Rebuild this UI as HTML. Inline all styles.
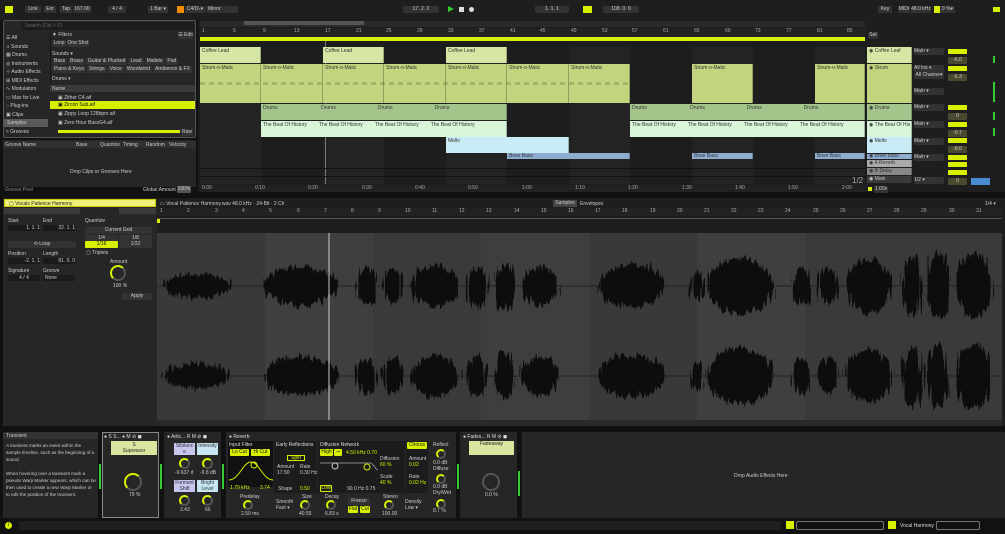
<!DOCTYPE html><html><head><meta charset="utf-8"><style>
*{margin:0;padding:0;box-sizing:border-box}
body{width:1005px;height:534px;background:#111;font-family:"Liberation Sans",sans-serif;font-size:5px;color:#ccc;position:relative;overflow:hidden}
.a{position:absolute;white-space:nowrap}
.p{background:#262626}
.b{background:#333;color:#ccc;border-radius:1px;text-align:center;line-height:7px;height:7px}
.y{background:#d8f000;color:#111}
.c{position:absolute;color:#333;font-size:5px;padding:1px 2px;overflow:hidden;border-right:1px solid rgba(0,0,0,.25);white-space:nowrap}
.k{position:absolute;border-radius:50%;border:2px solid #d8f000;border-right-color:#555;border-bottom-color:#555}
.t{color:#ddd}
</style></head><body>
<div class="a" style="left:0;top:0;width:1005px;height:20px;background:#1e1e1e"></div>
<div class="a y" style="left:5px;top:6px;width:8px;height:7px"></div>
<div class="a b" style="left:25px;top:6px;width:16px">Link</div>
<div class="a b" style="left:44px;top:6px;width:12px">Ext</div>
<div class="a b" style="left:60px;top:6px;width:12px">Tap</div>
<div class="a b" style="left:73px;top:6px;width:18px">167.00</div>
<div class="a b" style="left:108px;top:6px;width:18px">4 / 4</div>
<div class="a b" style="left:148px;top:6px;width:20px">1 Bar ▾</div>
<div class="a" style="left:177px;top:6px;width:7px;height:7px;background:#f08c00"></div>
<div class="a b" style="left:185px;top:6px;width:20px">C4/D♭▾</div>
<div class="a b" style="left:206px;top:6px;width:32px;text-align:left;padding-left:2px">Minor</div>
<div class="a b" style="left:403px;top:6px;width:36px">17.  2.  2</div>
<div class="a" style="left:448px;top:6px;width:0;height:0;border-left:6px solid #3c3;border-top:3.5px solid transparent;border-bottom:3.5px solid transparent"></div>
<div class="a" style="left:459px;top:7px;width:5px;height:5px;background:#ddd"></div>
<div class="a" style="left:469px;top:7px;width:5px;height:5px;background:#ddd;border-radius:50%"></div>
<div class="a b" style="left:535px;top:6px;width:34px">1.  1.  1</div>
<div class="a y" style="left:583px;top:6px;width:9px;height:7px"></div>
<div class="a b" style="left:603px;top:6px;width:36px">108.  0.  0</div>
<div class="a b" style="left:878px;top:6px;width:14px">Key</div>
<div class="a b" style="left:898px;top:6px;width:12px">MIDI</div>
<div class="a b" style="left:911px;top:6px;width:20px">48.0 kHz</div>
<div class="a y" style="left:934px;top:6px;width:6px;height:7px"></div>
<div class="a b" style="left:940px;top:6px;width:15px">0 %▾</div>
<div class="a y" style="left:993px;top:7px;width:7px;height:5px"></div>
<!-- browser -->
<div class="a p" style="left:3px;top:20px;width:193px;height:118px;border:1px solid #555;border-radius:2px"></div>
<div class="a" style="left:22px;top:22px;width:172px;height:8px;background:#1c1c1c;color:#666;padding:1px 3px">Search (Ctrl + F)</div>
<div class="a" style="left:6px;top:34px;line-height:8.5px;color:#ccc">☰ All<br>♫ Sounds<br>▦ Drums<br>◎ Instruments<br>⊹ Audio Effects<br>⊞ MIDI Effects<br>∿ Modulators<br>▭ Max for Live<br>◌ Plug-ins<br>▣ Clips</div>
<div class="a" style="left:4px;top:119px;width:44px;height:8px;background:#5a5a5a;padding:1px 3px">Samples</div>
<div class="a" style="left:6px;top:129px">≈ Grooves</div>
<div class="a" style="left:50px;top:31px;width:145px;height:54px;background:#262626;border-left:1px solid #1a1a1a"></div>
<div class="a" style="left:52px;top:32px">▼ Filters</div><div class="a b" style="left:178px;top:32px;width:15px">☰ Edit</div>
<div class="a b" style="left:52px;top:40px;width:14px">Loop</div><div class="a b" style="left:67px;top:40px;width:22px">One Shot</div>
<div class="a" style="left:52px;top:51px">Sounds ▾</div>
<div class="a" style="left:52px;top:58px;display:flex;gap:1px;flex-wrap:wrap;width:140px;white-space:normal"><span class="b" style="padding:0 2px">Bass</span><span class="b" style="padding:0 2px">Brass</span><span class="b" style="padding:0 2px">Guitar &amp; Plucked</span><span class="b" style="padding:0 2px">Lead</span><span class="b" style="padding:0 2px">Mallets</span><span class="b" style="padding:0 2px">Pad</span><span class="b" style="padding:0 2px">Piano &amp; Keys</span><span class="b" style="padding:0 2px">Strings</span><span class="b" style="padding:0 2px">Voice</span><span class="b" style="padding:0 2px">Woodwind</span><span class="b" style="padding:0 2px">Ambience &amp; FX</span></div>
<div class="a" style="left:52px;top:76px">Drums ▾</div>
<div class="a" style="left:50px;top:85px;width:145px;height:7px;background:#3a3a3a;padding:1px 2px">Name</div>
<div class="a" style="left:58px;top:94px;line-height:8.5px">▣ Zither C4.aif</div>
<div class="a y" style="left:50px;top:101px;width:145px;height:8px;padding:1px 8px">▣ Zircon Sub.aif</div>
<div class="a" style="left:58px;top:110px;line-height:8.5px">▣ Zippy Loop 128bpm.aif<br>▣ Zero Hour BassG4.aif</div>
<div class="a" style="left:58px;top:130px;width:122px;height:3px;background:#d8f000"></div>
<div class="a b" style="left:181px;top:129px;width:12px">Raw</div>
<!-- groove pool -->
<div class="a p" style="left:3px;top:140px;width:193px;height:47px"></div>
<div class="a" style="left:3px;top:141px;width:193px;height:7px;background:#303030"></div>
<div class="a" style="left:5px;top:142px">Groove Name</div><div class="a" style="left:76px;top:142px">Base</div><div class="a" style="left:100px;top:142px">Quantize</div><div class="a" style="left:123px;top:142px">Timing</div><div class="a" style="left:146px;top:142px">Random</div><div class="a" style="left:169px;top:142px">Velocity</div>
<div class="a" style="left:70px;top:169px">Drop Clips or Grooves Here</div>
<div class="a" style="left:5px;top:187px;color:#888">Groove Pool</div>
<div class="a" style="left:143px;top:187px">Global Amount</div><div class="a b" style="left:177px;top:186px;width:14px;background:#555">100%</div>
<!-- arrangement -->
<div class="a" style="left:198px;top:20px;width:668px;height:172px;background:#1c1c1c"></div>
<div class="a" style="left:200px;top:21px;width:665px;height:6px;background:#2a2a2a"></div>
<div class="a" style="left:244px;top:21px;width:120px;height:4px;background:#555"></div>
<div class="a" style="left:200px;top:28px;width:665px;height:9px;background:#222;color:#aaa;font-size:5px">
<span class="a" style="left:2px">1</span><span class="a" style="left:33px">5</span><span class="a" style="left:63px">9</span><span class="a" style="left:94px">13</span><span class="a" style="left:125px">17</span><span class="a" style="left:156px">21</span><span class="a" style="left:186px">25</span><span class="a" style="left:217px">29</span><span class="a" style="left:248px">33</span><span class="a" style="left:279px">37</span><span class="a" style="left:310px">41</span><span class="a" style="left:340px">45</span><span class="a" style="left:371px">49</span><span class="a" style="left:402px">53</span><span class="a" style="left:432px">57</span><span class="a" style="left:463px">61</span><span class="a" style="left:494px">65</span><span class="a" style="left:525px">69</span><span class="a" style="left:555px">73</span><span class="a" style="left:586px">77</span><span class="a" style="left:617px">81</span><span class="a" style="left:647px">85</span></div>
<div class="a" style="left:200px;top:37px;width:665px;height:4px;background:#d8f000"></div>
<div class="a" style="left:200px;top:47px;width:665px;height:137px;background:repeating-linear-gradient(90deg,#232323 0 61px,#1d1d1d 61px 123px)"></div>
<div class="a" style="left:325px;top:41px;width:1px;height:143px;background:#777"></div>
<div class="c" style="left:200px;top:47px;width:61px;height:16px;background:#d6e6a4">Coffee Lead</div>
<div class="c" style="left:323px;top:47px;width:61px;height:16px;background:#d6e6a4">Coffee Lead</div>
<div class="c" style="left:446px;top:47px;width:61px;height:16px;background:#d6e6a4">Coffee Lead</div>
<div class="c" style="left:200px;top:64px;width:61px;height:39px;background:#c3d47f">Strum-o-Matic</div>
<div class="c" style="left:261px;top:64px;width:62px;height:39px;background:#c3d47f">Strum-o-Matic</div>
<div class="c" style="left:323px;top:64px;width:61px;height:39px;background:#c3d47f">Strum-o-Matic</div>
<div class="c" style="left:384px;top:64px;width:62px;height:39px;background:#c3d47f">Strum-o-Matic</div>
<div class="c" style="left:446px;top:64px;width:61px;height:39px;background:#c3d47f">Strum-o-Matic</div>
<div class="c" style="left:507px;top:64px;width:62px;height:39px;background:#c3d47f">Strum-o-Matic</div>
<div class="c" style="left:569px;top:64px;width:61px;height:39px;background:#c3d47f">Strum-o-Matic</div>
<div class="c" style="left:692px;top:64px;width:61px;height:39px;background:#c3d47f">Strum-o-Matic</div>
<div class="c" style="left:815px;top:64px;width:50px;height:39px;background:#c3d47f">Strum-o-Matic</div>
<div class="a" style="left:200px;top:82px;width:430px;height:3px;background:repeating-linear-gradient(90deg,rgba(0,0,0,.15) 0 5px,transparent 5px 9px)"></div>
<div class="c" style="left:261px;top:104px;width:246px;height:16px;background:#a3c48b">Drums <span style="margin-left:42px">Drums</span><span style="margin-left:42px">Drums</span><span style="margin-left:42px">Drums</span></div>
<div class="c" style="left:630px;top:104px;width:235px;height:16px;background:#a3c48b">Drums <span style="margin-left:42px">Drums</span><span style="margin-left:42px">Drums</span><span style="margin-left:42px">Drums</span></div>
<div class="c" style="left:261px;top:121px;width:246px;height:16px;background:#d9f6d9">The Beat Of History<span style="margin-left:12px">The Beat Of History</span><span style="margin-left:12px">The Beat Of History</span><span style="margin-left:12px">The Beat Of History</span></div>
<div class="c" style="left:630px;top:121px;width:235px;height:16px;background:#d9f6d9">The Beat Of History<span style="margin-left:12px">The Beat Of History</span><span style="margin-left:12px">The Beat Of History</span><span style="margin-left:12px">The Beat Of History</span></div>
<div class="c" style="left:446px;top:137px;width:123px;height:16px;background:#c9ebf5">Mello</div>
<div class="c" style="left:507px;top:153px;width:123px;height:6px;background:#8eacd0;padding:0 2px;line-height:6px">Bose Bass</div>
<div class="c" style="left:692px;top:153px;width:61px;height:6px;background:#8eacd0;padding:0 2px;line-height:6px">Bose Bass</div>
<div class="c" style="left:815px;top:153px;width:50px;height:6px;background:#8eacd0;padding:0 2px;line-height:6px">Bose Bass</div>
<div class="a" style="left:200px;top:168px;width:665px;height:1px;background:#111"></div>
<div class="a" style="left:200px;top:176px;width:665px;height:1px;background:#111"></div>
<div class="a" style="left:852px;top:176px;font-size:8px;color:#aaa">1/2</div>
<div class="a" style="left:200px;top:185px;width:665px;height:7px;background:#222;color:#aaa"><span class="a" style="left:2px">0:00</span><span class="a" style="left:55px">0:10</span><span class="a" style="left:108px">0:20</span><span class="a" style="left:162px">0:30</span><span class="a" style="left:215px">0:40</span><span class="a" style="left:268px">0:50</span><span class="a" style="left:322px">1:00</span><span class="a" style="left:375px">1:10</span><span class="a" style="left:428px">1:20</span><span class="a" style="left:482px">1:30</span><span class="a" style="left:535px">1:40</span><span class="a" style="left:588px">1:50</span><span class="a" style="left:642px">2:00</span></div>
<!-- track headers -->
<div class="a" style="left:866px;top:20px;width:139px;height:172px;background:#1e1e1e"></div>
<div class="a b" style="left:868px;top:32px;width:10px">Set</div>
<div class="c" style="left:867px;top:47px;width:45px;height:16px;background:#d6e6a4">◉ Coffee Leaf</div>
<div class="c" style="left:867px;top:64px;width:45px;height:39px;background:#c3d47f">◉ Strum</div>
<div class="c" style="left:867px;top:104px;width:45px;height:16px;background:#a3c48b">◉ Drums</div>
<div class="c" style="left:867px;top:121px;width:45px;height:16px;background:#d9f6d9">◉ The Beat Of His</div>
<div class="c" style="left:867px;top:137px;width:45px;height:16px;background:#c9ebf5">◉ Mello</div>
<div class="c" style="left:867px;top:154px;width:45px;height:5px;background:#8eacd0;padding:0 2px;line-height:5px">◉ Bose Bass</div>
<div class="c" style="left:867px;top:160px;width:45px;height:7px;background:#aaa;line-height:5px">◉ A Reverb</div>
<div class="c" style="left:867px;top:168px;width:45px;height:7px;background:#888;line-height:5px">◉ B Delay</div>
<div class="c" style="left:867px;top:176px;width:45px;height:7px;background:#3a3a3a;color:#ccc;line-height:5px">◉ Main</div>
<div class="a" style="left:914px;top:48px;line-height:1">
<div class="b" style="width:30px;text-align:left;position:absolute;top:0">Main ▾</div>
<div class="b" style="width:30px;text-align:left;position:absolute;top:17px">All Ins ▾</div>
<div class="b" style="width:30px;position:absolute;top:24px">All Channe▾</div>
<div class="b" style="width:30px;text-align:left;position:absolute;top:40px">Main ▾</div>
<div class="b" style="width:30px;text-align:left;position:absolute;top:56px">Main ▾</div>
<div class="b" style="width:30px;text-align:left;position:absolute;top:73px">Main ▾</div>
<div class="b" style="width:30px;text-align:left;position:absolute;top:90px">Main ▾</div>
<div class="b" style="width:30px;text-align:left;position:absolute;top:106px">Main ▾</div>
<div class="b" style="width:30px;text-align:left;position:absolute;top:129px">1/2 ▾</div></div>
<div class="a" style="left:948px;top:48px">
<div class="y" style="position:absolute;width:19px;height:5px;top:1px"></div><div class="b" style="position:absolute;width:19px;top:9px;background:#4a4a30">-6.0</div>
<div class="y" style="position:absolute;width:19px;height:5px;top:18px"></div><div class="b" style="position:absolute;width:19px;top:26px;background:#4a4a30">-6.3</div>
<div class="y" style="position:absolute;width:19px;height:5px;top:57px"></div><div class="b" style="position:absolute;width:19px;top:65px;background:#4a4a30">0</div>
<div class="y" style="position:absolute;width:19px;height:5px;top:74px"></div><div class="b" style="position:absolute;width:19px;top:82px;background:#4a4a30">-0.7</div>
<div class="y" style="position:absolute;width:19px;height:5px;top:90px"></div><div class="b" style="position:absolute;width:19px;top:98px;background:#4a4a30">-8.0</div>
<div class="y" style="position:absolute;width:19px;height:5px;top:107px"></div>
<div class="y" style="position:absolute;width:19px;height:5px;top:114px"></div>
<div class="y" style="position:absolute;width:19px;height:5px;top:122px"></div>
<div class="b" style="position:absolute;width:19px;top:130px;background:#4a4a30">0</div>
<div style="position:absolute;left:23px;top:130px;width:19px;height:7px;background:#4a8ad0"></div></div>
<div class="a" style="left:993px;top:56px;width:2px;height:7px;background:#3c3"></div>
<div class="a" style="left:993px;top:82px;width:2px;height:20px;background:#3c3"></div>
<div class="a" style="left:993px;top:112px;width:2px;height:8px;background:#3c3"></div>
<div class="a" style="left:993px;top:128px;width:2px;height:8px;background:#3c3"></div>
<div class="a y" style="left:868px;top:187px;width:4px;height:4px"></div><div class="a b" style="left:874px;top:186px;width:14px">1.00x</div>
<!-- clip view -->
<div class="a p" style="left:3px;top:198px;width:154px;height:228px"></div>
<div class="a" style="left:4px;top:199px;width:152px;height:8px;background:#eef07a;color:#222;padding:1px 4px;border:1px solid #cc0">▢ Vocals Patience Harmony</div>
<div class="a" style="left:4px;top:208px;width:76px;height:6px;background:#3a3a3a"></div>
<div class="a" style="left:119px;top:208px;width:37px;height:6px;background:#3a3a3a"></div>
<div class="a" style="left:8px;top:218px">Start</div><div class="a" style="left:43px;top:218px">End</div>
<div class="a" style="left:8px;top:225px;width:32px;height:6px;background:#1a1a1a;text-align:right">1.  1.  1</div>
<div class="a" style="left:43px;top:225px;width:32px;height:6px;background:#1a1a1a;text-align:right">32.  1.  1</div>
<div class="a b" style="left:8px;top:241px;width:68px">⟲ Loop</div>
<div class="a" style="left:8px;top:251px">Position</div><div class="a" style="left:43px;top:251px">Length</div>
<div class="a" style="left:8px;top:258px;width:32px;height:6px;background:#1a1a1a;text-align:right">-2.  1.  1</div>
<div class="a" style="left:43px;top:258px;width:32px;height:6px;background:#1a1a1a;text-align:right">81.  0.  0</div>
<div class="a" style="left:8px;top:268px">Signature</div><div class="a" style="left:43px;top:268px">Groove</div>
<div class="a" style="left:8px;top:275px;width:32px;height:6px;background:#1a1a1a;text-align:center">4 / 4</div>
<div class="a" style="left:43px;top:275px;width:32px;height:6px;background:#1a1a1a;padding-left:2px">None</div>
<div class="a" style="left:85px;top:218px">Quantize</div>
<div class="a b" style="left:85px;top:227px;width:67px">Current Grid</div>
<div class="a b" style="left:85px;top:235px;width:33px">1/4</div><div class="a b" style="left:119px;top:235px;width:33px">1/8</div>
<div class="a b y" style="left:85px;top:241px;width:33px">1/16</div><div class="a b" style="left:119px;top:241px;width:33px">1/32</div>
<div class="a" style="left:86px;top:250px">▢ Triplets</div>
<div class="a" style="left:110px;top:259px">Amount</div>
<div class="k" style="left:110px;top:265px;width:16px;height:16px"></div>
<div class="a" style="left:113px;top:283px">100 %</div>
<div class="a b" style="left:122px;top:293px;width:30px">Apply</div>
<!-- waveform -->
<div class="a" style="left:157px;top:198px;width:848px;height:228px;background:#1e1e1e"></div>
<div class="a" style="left:160px;top:201px">▭ Vocal Patience Harmony.wav  48.0 kHz · 24-Bit · 2 Ch</div>
<div class="a" style="left:553px;top:200px;width:24px;height:7px;background:#444;text-align:center">Samples</div>
<div class="a" style="left:580px;top:201px">Envelopes</div>
<div class="a" style="left:985px;top:201px">1/4 ▾</div>
<div class="a" style="left:157px;top:208px;width:845px;height:8px;background:#222;color:#aaa"><span class="a" style="left:3px">1</span><span class="a" style="left:30px">2</span><span class="a" style="left:58px">3</span><span class="a" style="left:85px">4</span><span class="a" style="left:112px">5</span><span class="a" style="left:140px">6</span><span class="a" style="left:167px">7</span><span class="a" style="left:194px">8</span><span class="a" style="left:221px">9</span><span class="a" style="left:248px">10</span><span class="a" style="left:275px">11</span><span class="a" style="left:302px">12</span><span class="a" style="left:329px">13</span><span class="a" style="left:357px">14</span><span class="a" style="left:384px">15</span><span class="a" style="left:411px">16</span><span class="a" style="left:438px">17</span><span class="a" style="left:465px">18</span><span class="a" style="left:493px">19</span><span class="a" style="left:520px">20</span><span class="a" style="left:547px">21</span><span class="a" style="left:574px">22</span><span class="a" style="left:601px">23</span><span class="a" style="left:628px">24</span><span class="a" style="left:656px">25</span><span class="a" style="left:683px">26</span><span class="a" style="left:710px">27</span><span class="a" style="left:737px">28</span><span class="a" style="left:764px">29</span><span class="a" style="left:792px">30</span><span class="a" style="left:819px">31</span></div>
<div class="a" style="left:157px;top:218px;width:845px;height:1px;background:#555"></div>
<div class="a y" style="left:157px;top:219px;width:3px;height:4px"></div>
<div class="a" style="left:157px;top:233px;width:845px;height:187px;background:linear-gradient(90deg,#393939 0 108px,#3f3f3f 108px 216px,#3a3a3a 216px 324px,#3e3e3e 324px 432px,#393939 432px 540px,#3f3f3f 540px 648px,#3a3a3a 648px 845px)"></div>
<svg class="a" style="left:157px;top:233px" width="845" height="187">
<defs><filter id="j" x="-10%" y="-60%" width="120%" height="220%"><feTurbulence type="fractalNoise" baseFrequency="0.45 0.02" numOctaves="2" seed="3"/><feDisplacementMap in="SourceGraphic" scale="16" xChannelSelector="G" yChannelSelector="R"/></filter></defs>
<line x1="0" y1="53" x2="845" y2="53" stroke="#222" stroke-width="1"/><line x1="0" y1="143" x2="845" y2="143" stroke="#222" stroke-width="1"/>
<g fill="#0a0a0a" filter="url(#j)">
<g id="w">
<ellipse cx="40" cy="53" rx="33" ry="12"/><ellipse cx="144" cy="53" rx="37" ry="19"/><ellipse cx="210" cy="53" rx="10" ry="18"/><ellipse cx="236" cy="53" rx="10" ry="17"/><ellipse cx="278" cy="53" rx="24" ry="20"/><ellipse cx="320" cy="53" rx="10" ry="19"/><ellipse cx="348" cy="53" rx="10" ry="23"/><ellipse cx="383" cy="53" rx="18" ry="19"/><ellipse cx="475" cy="53" rx="33" ry="21"/><ellipse cx="540" cy="53" rx="6" ry="14"/><ellipse cx="583" cy="53" rx="33" ry="28"/><ellipse cx="645" cy="53" rx="9" ry="18"/><ellipse cx="671" cy="53" rx="10" ry="18"/><ellipse cx="712" cy="53" rx="23" ry="26"/><ellipse cx="755" cy="53" rx="10" ry="30"/><ellipse cx="781" cy="53" rx="11" ry="32"/><ellipse cx="817" cy="53" rx="18" ry="32"/>
</g>
<use href="#w" y="90"/>
</g>
<line x1="172" y1="0" x2="172" y2="187" stroke="#ccc" stroke-width="1"/>
</svg>
<div class="a" style="left:157px;top:420px;width:845px;height:6px;background:#2a2a2a"></div>
<!-- devices -->
<div class="a p" style="left:3px;top:432px;width:95px;height:86px"></div>
<div class="a" style="left:3px;top:432px;width:95px;height:7px;background:#333;padding:1px 3px">Transient</div>
<div class="a" style="left:6px;top:442px;width:90px;line-height:7px;font-size:4.6px;white-space:normal">A transient marks an event within the sample timeline, such as the beginning of a sound.<br><br>When hovering over a transient mark a pseudo Warp Marker appears, which can be then used to create a new Warp Marker or to edit the position of the transient.</div>
<div class="a" style="left:99px;top:464px;width:2px;height:25px;background:#3c3"></div>
<div class="a p" style="left:102px;top:432px;width:57px;height:86px;border:1px solid #888"></div>
<div class="a" style="left:104px;top:434px;color:#ddd">● S S... ● M ⊘ ◼</div>
<div class="a" style="left:111px;top:441px;width:46px;height:14px;background:#d8e6a0;color:#222;text-align:center;line-height:6px;padding-top:1px">S<br>Supressor</div>
<div class="k" style="left:124px;top:473px;width:18px;height:18px"></div>
<div class="a" style="left:129px;top:492px">79 %</div>
<div class="a" style="left:160px;top:464px;width:2px;height:25px;background:#3c3"></div>
<div class="a p" style="left:164px;top:432px;width:57px;height:86px"></div>
<div class="a" style="left:167px;top:434px;color:#ddd">● Artic... R M ⊘ ◼</div>
<div class="a" style="left:174px;top:443px;width:21px;height:12px;background:#c6c6ee;color:#333;text-align:center;white-space:normal">Sibilanc e</div>
<div class="a" style="left:197px;top:443px;width:21px;height:12px;background:#c6e6f4;color:#333;text-align:center">Intensity</div>
<div class="k" style="left:179px;top:458px;width:11px;height:11px"></div><div class="k" style="left:202px;top:458px;width:11px;height:11px"></div>
<div class="a" style="left:175px;top:470px">-9.637 d</div><div class="a" style="left:200px;top:470px">-9.8 dB</div>
<div class="a" style="left:174px;top:480px;width:21px;height:12px;background:#c6c6ee;color:#333;text-align:center;white-space:normal">Formant Shift</div>
<div class="a" style="left:197px;top:480px;width:21px;height:12px;background:#c6e6f4;color:#333;text-align:center;white-space:normal">Bright Level</div>
<div class="k" style="left:179px;top:495px;width:11px;height:11px"></div><div class="k" style="left:202px;top:495px;width:11px;height:11px"></div>
<div class="a" style="left:180px;top:507px">3.43</div><div class="a" style="left:205px;top:507px">66</div>
<div class="a" style="left:222px;top:464px;width:2px;height:25px;background:#3c3"></div>
<div class="a p" style="left:226px;top:432px;width:230px;height:86px"></div>
<div class="a" style="left:229px;top:434px;color:#ddd">● Reverb</div>
<div class="a" style="left:228px;top:441px;width:45px;height:46px;background:#111"></div>
<div class="a" style="left:229px;top:442px;color:#ddd">Input Filter</div>
<div class="a b y" style="left:230px;top:449px;width:19px">Lo Cut</div><div class="a b y" style="left:251px;top:449px;width:19px">Hi Cut</div>
<svg class="a" style="left:229px;top:458px" width="44" height="24"><path d="M0 22 C10 22 14 4 22 4 C30 4 34 22 44 22" stroke="#d8f000" fill="none"/><circle cx="25" cy="7" r="3" stroke="#d8f000" fill="none"/></svg>
<div class="a" style="left:230px;top:485px;color:#d8f000">1.79 kHz</div><div class="a" style="left:260px;top:485px;color:#d8f000">3.74</div>
<div class="a" style="left:274px;top:441px;width:43px;height:52px;background:#1c1c1c"></div>
<div class="a" style="left:276px;top:442px;color:#ddd">Early Reflections</div>
<div class="a" style="left:287px;top:455px;width:18px;height:6px;border:1px solid #d8f000;color:#d8f000;text-align:center;line-height:4px">Spin</div>
<div class="a" style="left:277px;top:464px">Amount<br>17.50</div><div class="a" style="left:300px;top:464px">Rate<br>0.30 Hz</div>
<div class="a" style="left:278px;top:486px">Shape</div><div class="a" style="left:300px;top:486px;color:#d8f000">0.50</div>
<div class="a" style="left:318px;top:441px;width:87px;height:52px;background:#1c1c1c"></div>
<div class="a" style="left:320px;top:442px;color:#ddd">Diffusion Network</div>
<div class="a b y" style="left:320px;top:449px;width:13px">High</div><div class="a b y" style="left:334px;top:449px;width:8px">⊸</div>
<div class="a" style="left:346px;top:450px;color:#d8f000">4.50 kHz  0.70</div>
<svg class="a" style="left:320px;top:458px" width="58" height="24"><path d="M0 5 L50 5 C54 5 55 12 58 12" stroke="#888" fill="none"/><circle cx="15" cy="8" r="3" stroke="#ccc" fill="none"/><circle cx="47" cy="9" r="3" stroke="#d8f000" fill="none"/></svg>
<div class="a" style="left:380px;top:456px;color:#ccc">Diffusion<br><span style="color:#d8f000">60 %</span><br><br>Scale<br><span style="color:#d8f000">40 %</span></div>
<div class="a b" style="left:320px;top:485px;width:12px;border:1px solid #d8f000;background:#222;color:#d8f000;line-height:5px">Low</div>
<div class="a" style="left:347px;top:486px">90.0 Hz   0.75</div>
<div class="a" style="left:406px;top:441px;width:22px;height:52px;background:#1c1c1c"></div>
<div class="a b y" style="left:407px;top:442px;width:20px">Chorus</div>
<div class="a" style="left:409px;top:456px">Amount<br><span style="color:#d8f000">0.02</span><br><br>Rate<br><span style="color:#d8f000">0.02 Hz</span></div>
<div class="a" style="left:433px;top:442px;line-height:6px">Reflect<br><br><br>0.0 dB<br>Diffuse<br><br><br>0.0 dB<br>Dry/Wet<br><br><br>8.7 %</div>
<div class="k" style="left:436px;top:449px;width:10px;height:10px"></div><div class="k" style="left:436px;top:474px;width:10px;height:10px"></div><div class="k" style="left:436px;top:499px;width:10px;height:10px"></div>
<div class="a" style="left:240px;top:494px">Predelay</div><div class="k" style="left:243px;top:500px;width:10px;height:10px"></div><div class="a" style="left:241px;top:511px">2.50 ms</div>
<div class="a" style="left:276px;top:499px">Smooth<br>Fast ▾</div>
<div class="a" style="left:302px;top:494px">Size</div><div class="k" style="left:300px;top:500px;width:10px;height:10px"></div><div class="a" style="left:299px;top:511px">40.55</div>
<div class="a" style="left:325px;top:494px">Decay</div><div class="k" style="left:326px;top:500px;width:10px;height:10px"></div><div class="a" style="left:325px;top:511px">6.83 s</div>
<div class="a b" style="left:348px;top:498px;width:22px">Freeze</div>
<div class="a b y" style="left:348px;top:506px;width:10px">Flat</div><div class="a b y" style="left:360px;top:506px;width:10px">Cut</div>
<div class="a" style="left:383px;top:494px">Stereo</div><div class="k" style="left:384px;top:500px;width:10px;height:10px"></div><div class="a" style="left:382px;top:511px">100.00</div>
<div class="a" style="left:405px;top:499px">Density<br>Low ▾</div>
<div class="a" style="left:457px;top:464px;width:2px;height:25px;background:#3c3"></div>
<div class="a p" style="left:460px;top:432px;width:57px;height:86px"></div>
<div class="a" style="left:463px;top:434px;color:#ddd">● Fades... R M ⊘ ◼</div>
<div class="a" style="left:469px;top:441px;width:45px;height:14px;background:#d8e6a0;color:#222;text-align:center">Fadeaway</div>
<div class="k" style="left:482px;top:473px;width:18px;height:18px;border-color:#555"></div>
<div class="a" style="left:485px;top:492px">0.0 %</div>
<div class="a" style="left:518px;top:471px;width:2px;height:25px;background:#3c3"></div>
<div class="a p" style="left:522px;top:432px;width:483px;height:86px"></div>
<div class="a" style="left:734px;top:473px">Drop Audio Effects Here</div>
<div class="a" style="left:0;top:518px;width:1005px;height:16px;background:#111"></div>
<div class="a" style="left:5px;top:522px;width:7px;height:7px;border-radius:50%;background:#d8f000;color:#111;text-align:center;line-height:7px">i</div>
<div class="a" style="left:19px;top:521px;width:762px;height:9px;background:#1f1f1f"></div>
<div class="a y" style="left:786px;top:521px;width:8px;height:8px"></div>
<div class="a" style="left:796px;top:521px;width:88px;height:9px;border:1px solid #777;border-radius:2px"></div>
<div class="a y" style="left:888px;top:521px;width:8px;height:8px"></div>
<div class="a t" style="left:900px;top:523px">Vocal Harmony</div>
<div class="a" style="left:936px;top:521px;width:44px;height:9px;border:1px solid #777;border-radius:2px"></div>
</body></html>
